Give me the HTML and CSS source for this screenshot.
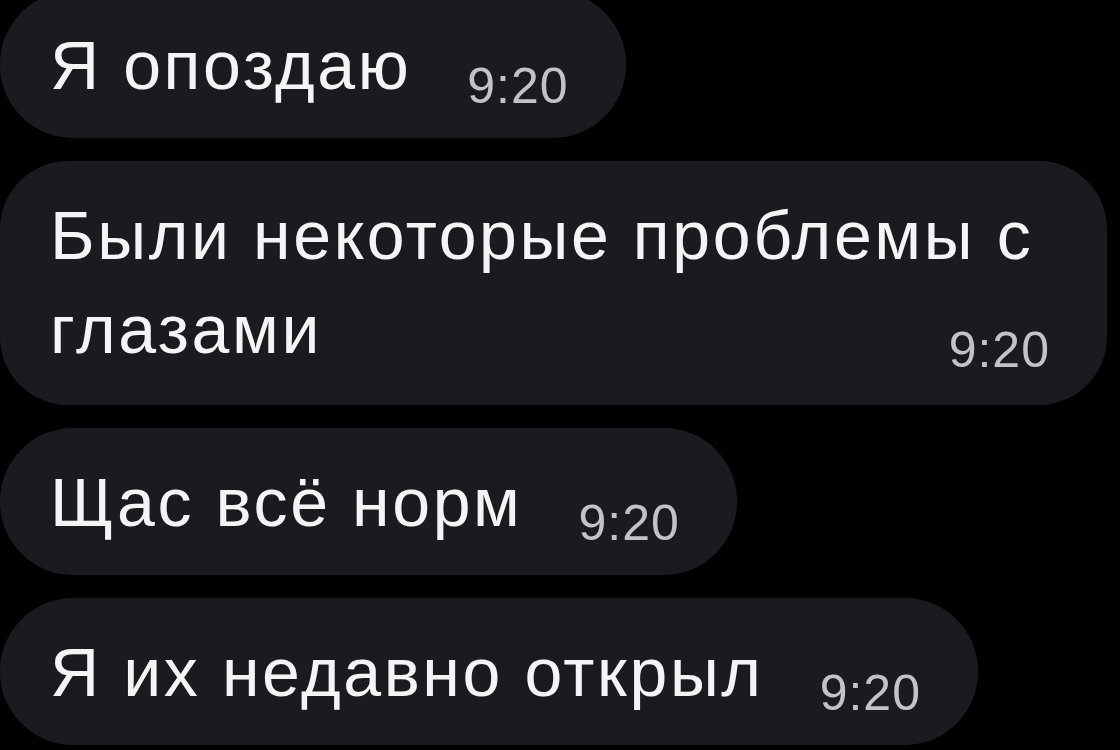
FILE: index.html
```html
<html>
    <head>
        <title>Чат</title>
        <meta name="viewport" content="width=device-width, initial-scale=1.0">
        <link rel="stylesheet" href="styles.css">
    </head>
    <body>
        <div class="chat">
            <div class="msg">Я опоздаю<span class="time">9:20</span></div>
            <div class="msg msg-long">Были некоторые проблемы с глазами<span class="time">9:20</span></div>
            <div class="msg">Щас всё норм<span class="time">9:20</span></div>
            <div class="msg">Я их недавно открыл<span class="time">9:20</span></div>
        </div>
    </body>
</html>
```

FILE: styles.css
```css
body {
    margin: 0;
    background-color: #000;
    font-family: 'Liberation Sans', Arial, sans-serif;
    overflow: hidden;
}
.chat {
    display: flex;
    flex-direction: column;
    align-items: flex-start;
    gap: 23px;
    margin-top: -9px;
}
.msg {
    display: flow-root;
    max-width: 1000px;
    padding: 27px 57px 26px 50px;
    background-color: #1b1a1f;
    border-radius: 73px;
    color: #f4f4f4;
    font-size: 68px;
    line-height: 94px;
    letter-spacing: 2.6px;
}
.msg-long {
    padding-bottom: 29px;
    border-radius: 68px;
}
/* time sits at the right of the last line, a bit below the baseline */
.time {
    float: right;
    margin: 44px 0 0 56px;
    font-size: 50px;
    line-height: 48px;
    letter-spacing: 1px;
    color: #c2c2c7;
}
```
